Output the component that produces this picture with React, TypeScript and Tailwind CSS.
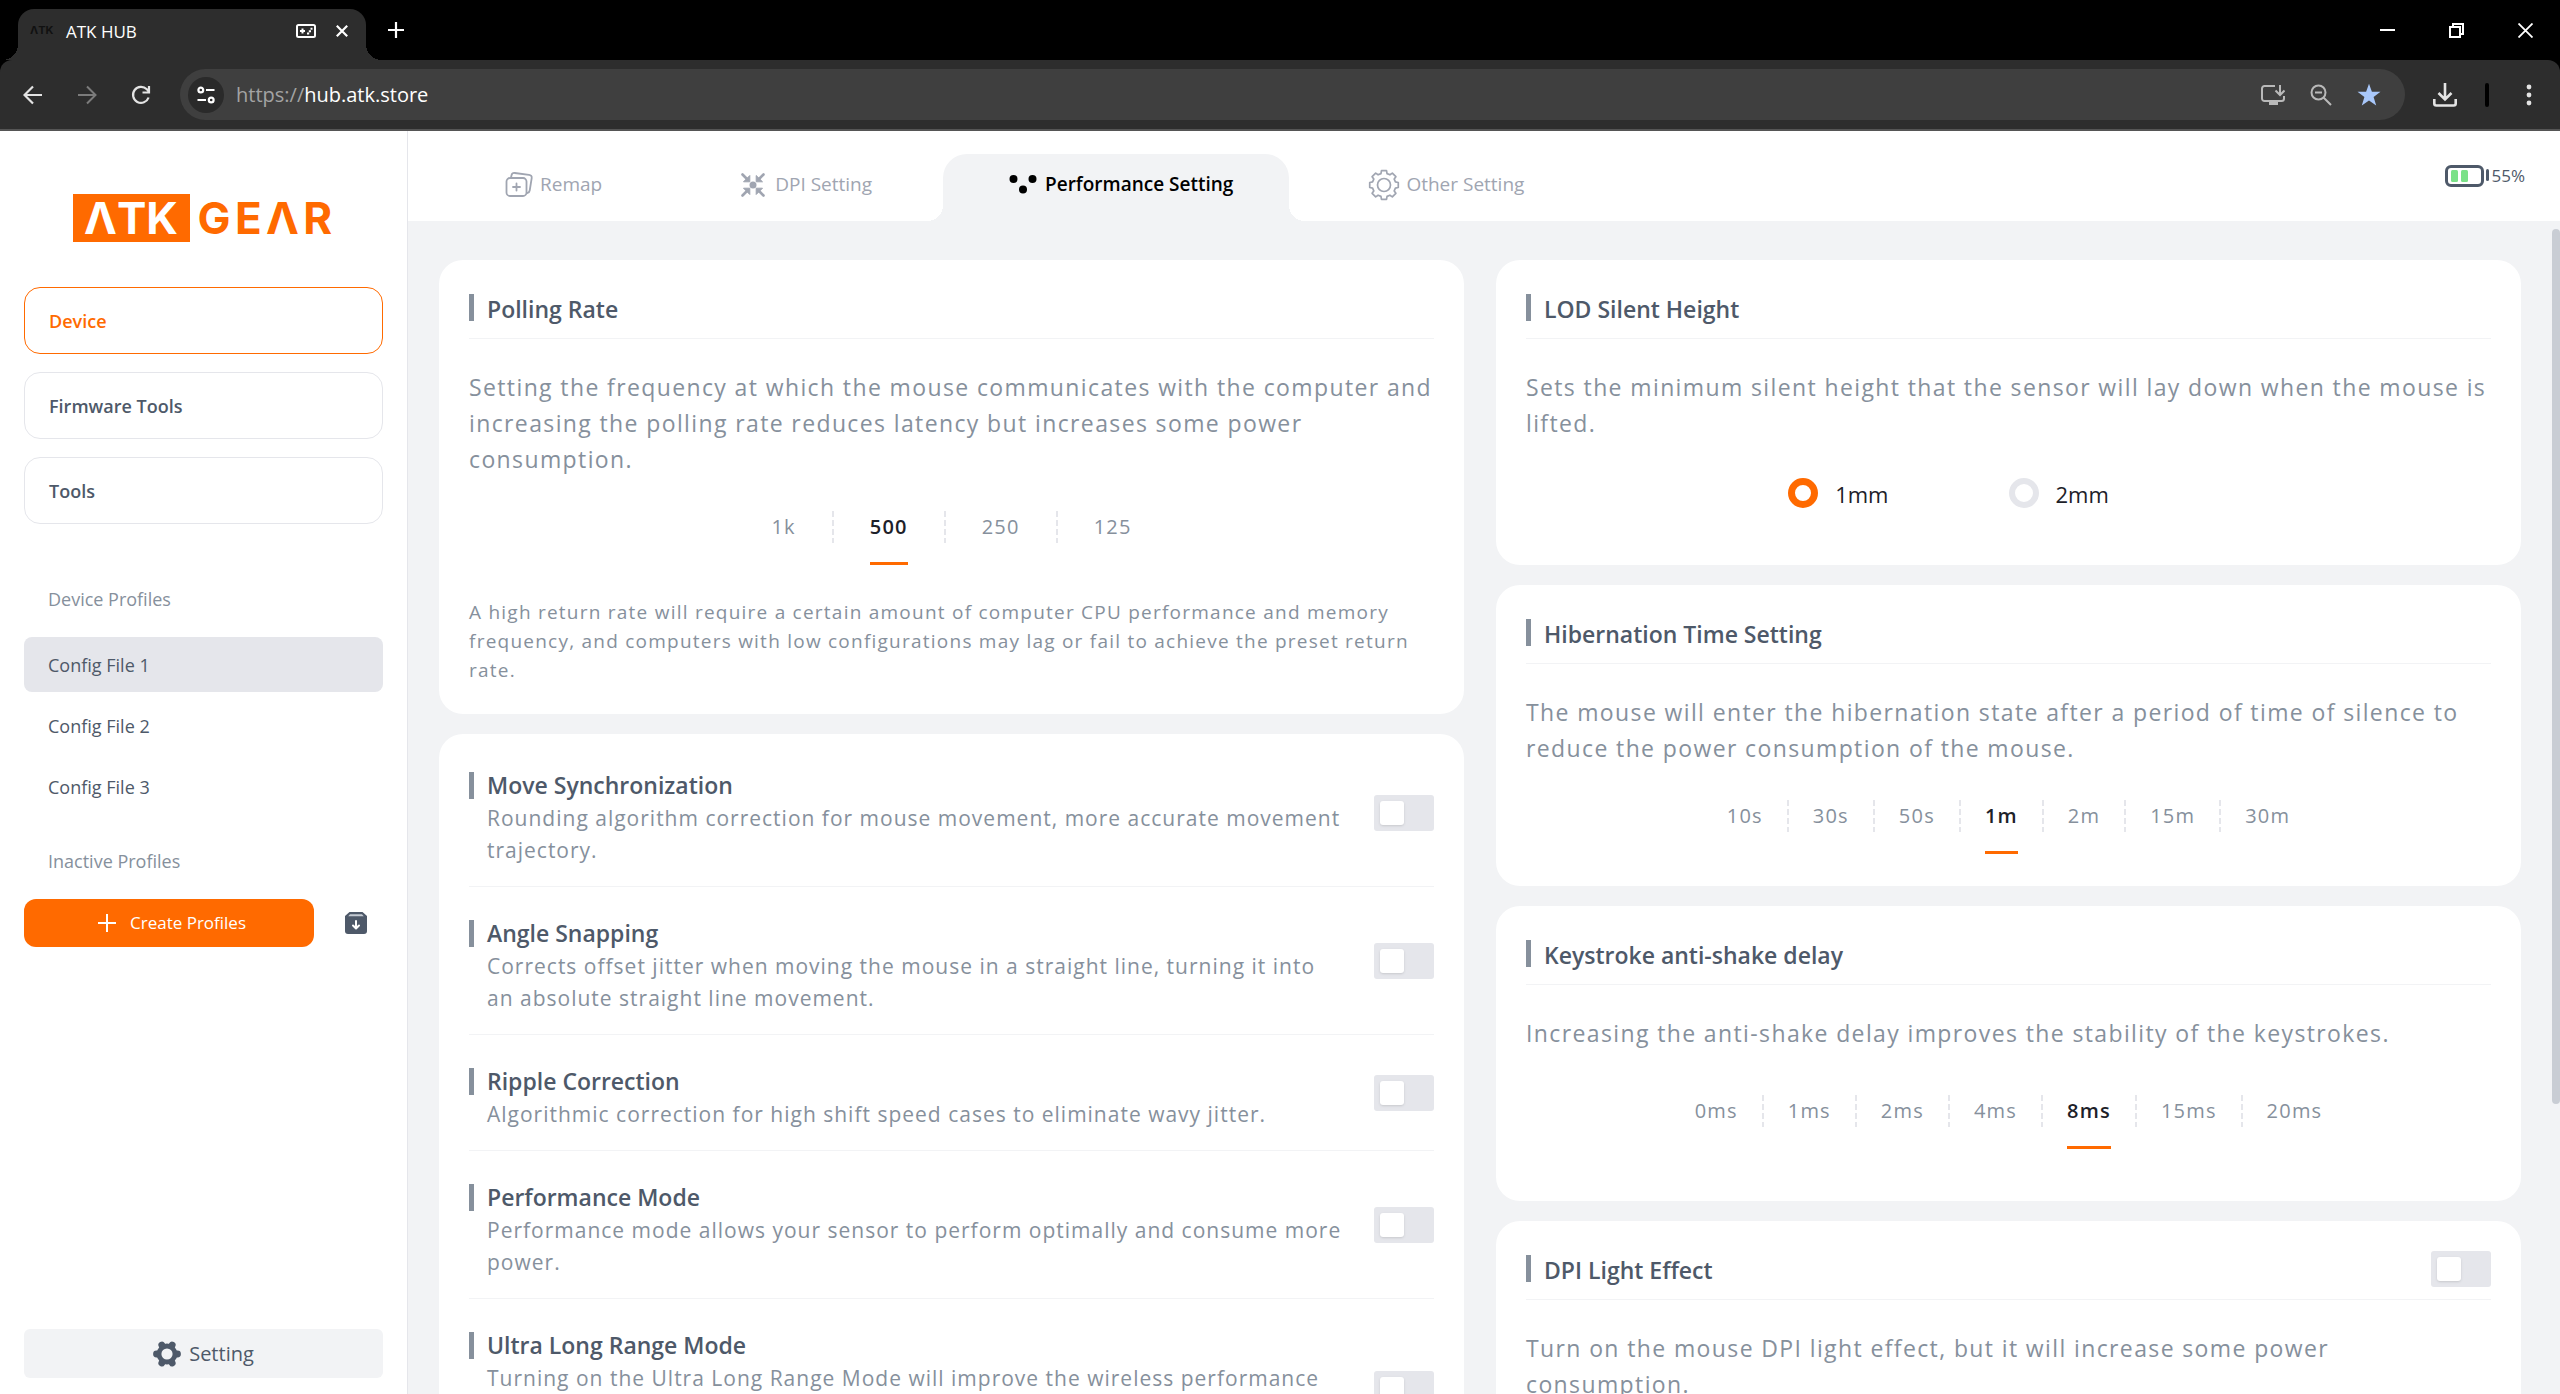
import { useState } from 'react';
import type { ReactNode } from 'react';
import clsx from 'clsx';

const TABS = [
  { label: 'Remap', icon: <RemapIcon /> },
  { label: 'DPI Setting', icon: <DpiIcon /> },
  { label: 'Performance Setting', icon: <PerformanceIcon /> },
  { label: 'Other Setting', icon: <GearOutlineIcon /> },
];

const SWITCHES = [
  {
    title: 'Move Synchronization',
    text: 'Rounding algorithm correction for mouse movement, more accurate movement trajectory.',
  },
  {
    title: 'Angle Snapping',
    text: 'Corrects offset jitter when moving the mouse in a straight line, turning it into an absolute straight line movement.',
  },
  {
    title: 'Ripple Correction',
    text: 'Algorithmic correction for high shift speed cases to eliminate wavy jitter.',
  },
  {
    title: 'Performance Mode',
    text: 'Performance mode allows your sensor to perform optimally and consume more power.',
  },
  {
    title: 'Ultra Long Range Mode',
    text: 'Turning on the Ultra Long Range Mode will improve the wireless performance',
    tall: true,
  },
];

/* Icons */

function RemapIcon() {
  return (
    <svg viewBox="0 0 32 32" className="size-8" fill="none" stroke="currentColor" strokeWidth="1.8" strokeLinecap="round" strokeLinejoin="round">
      <rect x="4.5" y="9" width="20" height="18" rx="3.5" />
      <path d="M9 8.5 9.6 6c.4-1.6 1.5-2.2 3.2-2L27 5.9c2 .3 3 1.3 2.7 3.2l-2 12.4c-.2 1.3-1 2.3-2.6 2.6" />
      <path d="M14.5 14.5v7M11 18h7" />
    </svg>
  );
}

function DpiIcon() {
  return (
    <svg viewBox="0 0 32 32" className="size-8" fill="currentColor" stroke="currentColor">
      <circle cx="16" cy="16" r="3.5" stroke="none" />
      <g strokeWidth="2.6" strokeLinecap="round">
        <path d="m5.5 5.5 4 4M26.5 5.5l-4 4M5.5 26.5l4-4M26.5 26.5l-4-4" />
      </g>
      <g strokeWidth="1" strokeLinejoin="round">
        <path d="M12.8 6.5v6.3H6.5zM19.2 6.5v6.3h6.3zM12.8 25.5v-6.3H6.5zM19.2 25.5v-6.3h6.3z" />
      </g>
    </svg>
  );
}

function PerformanceIcon() {
  return (
    <svg viewBox="0 0 32 32" className="size-8" fill="currentColor">
      <circle cx="6.5" cy="10" r="4" />
      <circle cx="25.5" cy="10" r="4" />
      <circle cx="16" cy="20.5" r="4" />
    </svg>
  );
}

function GearOutlineIcon() {
  const teeth = Array.from({ length: 8 }, (_, i) => {
    const at = (r: number, deg: number) => {
      const a = ((i * 45 + deg) * Math.PI) / 180;
      return `${(16 + r * Math.cos(a)).toFixed(2)} ${(16 + r * Math.sin(a)).toFixed(2)}`;
    };
    return [at(11.8, -15), at(14.5, -10), at(14.5, 10), at(11.8, 15)].join(' L');
  });
  return (
    <svg viewBox="0 0 32 32" className="size-8" fill="none" stroke="currentColor" strokeWidth="1.7" strokeLinejoin="round">
      <path d={`M${teeth.join(' L')}Z`} />
      <circle cx="16" cy="16" r="6.5" />
    </svg>
  );
}

function GearSolidIcon() {
  return (
    <svg viewBox="0 0 28 28" className="size-7" fill="none" stroke="currentColor">
      <g strokeWidth="6.8" strokeLinecap="round">
        <path d="M4.5 14H3.5M23.5 14h1M9.2 5.7 8.8 5M18.8 5.7l.4-.7M9.2 22.3l-.4.7M18.8 22.3l.4.7" />
      </g>
      <circle cx="14" cy="14" r="8" strokeWidth="4.8" />
    </svg>
  );
}

function ArchiveIcon() {
  return (
    <svg viewBox="0 0 22 22" className="size-[22px]">
      <path d="M4.5 0h13L22 4v15a3 3 0 0 1-3 3H3a3 3 0 0 1-3-3V4z" fill="#4e5969" />
      <path d="M5 2.2h12l1.8 2H3.2z" fill="#c5cbd3" />
      <path d="M11 9v7M8 13.5l3 3 3-3" fill="none" stroke="#fff" strokeWidth="2" strokeLinecap="round" strokeLinejoin="round" />
    </svg>
  );
}

function BatteryIcon() {
  return (
    <svg viewBox="0 0 44 22" className="w-11 h-[22px]">
      <rect x="1.5" y="1.5" width="36" height="19" rx="4.5" fill="#fff" stroke="#4e5969" strokeWidth="3" />
      <rect x="6" y="5" width="7" height="12" rx="1.5" fill="#7be188" />
      <rect x="16" y="5" width="7" height="12" rx="1.5" fill="#7be188" />
      <rect x="41" y="4" width="3" height="12" rx="1.5" fill="#4e5969" />
    </svg>
  );
}

/* Browser window */

function ChromeButton({ label, className, children }: { label: string; className: string; children: ReactNode }) {
  return (
    <button aria-label={label} className={clsx('flex items-center justify-center self-stretch shrink-0', className)}>
      {children}
    </button>
  );
}

function BrowserBar() {
  return (
    <div className="bg-black text-white shrink-0">
      <div className="flex h-[60px] pl-[18px]">
        <div className="relative mt-[9px] w-[348px] rounded-t-2xl bg-[#2d2d2d] flex items-center pl-3 pr-1.5 pb-2 before:absolute before:bottom-0 before:-left-4 before:size-4 before:bg-[radial-gradient(circle_at_0_0,transparent_16px,#2d2d2d_16px)] after:absolute after:bottom-0 after:-right-4 after:size-4 after:bg-[radial-gradient(circle_at_100%_0,transparent_16px,#2d2d2d_16px)]">
          <span className="w-9 font-['Inter'] text-[11px] font-bold text-[#111111]">ΛTK</span>
          <span className="flex-1 pt-0.5 text-[17px]">ATK HUB</span>
          <ChromeButton label="Game controller in use" className="w-9">
            <svg viewBox="0 0 20 14" className="w-5 h-3.5" fill="none" stroke="currentColor" strokeWidth="2">
              <rect x="1" y="1" width="18" height="12" rx="1.5" />
              <path d="M4 7h5M6.5 4.5v5M11 9.5h2.2M12.8 7.2H15M14.5 4.7h2" />
            </svg>
          </ChromeButton>
          <ChromeButton label="Close tab" className="w-9">
            <svg viewBox="0 0 12 12" className="size-3" stroke="currentColor" strokeWidth="2.2">
              <path d="m.8.8 10.4 10.4M11.2.8.8 11.2" />
            </svg>
          </ChromeButton>
        </div>
        <ChromeButton label="New tab" className="w-[60px]">
          <svg viewBox="0 0 16 16" className="size-4" stroke="currentColor" strokeWidth="2.2">
            <path d="M8 0v16M0 8h16" />
          </svg>
        </ChromeButton>
        <div className="ml-auto flex">
          <ChromeButton label="Minimize" className="w-[69px]">
            <svg viewBox="0 0 15 15" className="size-[15px]" stroke="currentColor" strokeWidth="2">
              <path d="M0 7h15" />
            </svg>
          </ChromeButton>
          <ChromeButton label="Restore" className="w-[69px]">
            <svg viewBox="0 0 15 15" className="size-[15px]" fill="none" stroke="currentColor" strokeWidth="2">
              <path d="M1 4h10v10H1zM4 4V1h10v10h-3" />
            </svg>
          </ChromeButton>
          <ChromeButton label="Close" className="w-[69px]">
            <svg viewBox="0 0 15 15" className="size-[15px]" stroke="currentColor" strokeWidth="1.8">
              <path d="m.5.5 14 14M14.5.5l-14 14" />
            </svg>
          </ChromeButton>
        </div>
      </div>

      <div className="flex items-center h-[71px] pl-1.5 rounded-t-xl bg-[#2d2d2d] border-b-2 border-[#555555] text-[#e3e3e3]">
        <ChromeButton label="Back" className="w-[54px]">
          <svg viewBox="0 0 20 20" className="size-5" fill="none" stroke="currentColor" strokeWidth="2.2">
            <path d="M19 10H2.5M10 1.5 1.5 10l8.5 8.5" />
          </svg>
        </ChromeButton>
        <ChromeButton label="Forward" className="w-[54px] text-[#7b7b7b]">
          <svg viewBox="0 0 20 20" className="size-5" fill="none" stroke="currentColor" strokeWidth="2">
            <path d="M1 10h16.5M10 1.5l8.5 8.5-8.5 8.5" />
          </svg>
        </ChromeButton>
        <ChromeButton label="Reload" className="w-[54px]">
          <svg viewBox="0 0 20 20" className="size-5" fill="none" stroke="currentColor" strokeWidth="2.2">
            <path d="M17.6 12.5a8 8 0 1 1-1.8-8.2L18 6.5M18 1v6.5h-6.5" />
          </svg>
        </ChromeButton>
        <div className="ml-3 flex-1 h-[51px] rounded-full bg-[#3f3f3f] flex items-center pl-2 pr-3">
          <button aria-label="View site information" className="size-9 rounded-full bg-[#2a2a2a] flex items-center justify-center text-white">
            <svg viewBox="0 0 18 18" className="size-[18px]" fill="none" stroke="currentColor" strokeWidth="2.2">
              <circle cx="3.8" cy="4" r="2.4" />
              <circle cx="14.2" cy="14" r="2.4" />
              <path d="M9 4h8.5M.5 14H9" />
            </svg>
          </button>
          <p className="ml-3 flex-1 text-[20px] text-white">
            <span className="text-[#a3a3a3]">https://</span>hub.atk.store
          </p>
          <ChromeButton label="Install app" className="w-12 text-[#b9b9b9]">
            <svg viewBox="0 0 24 22" className="w-6 h-[22px]" fill="none" stroke="currentColor" strokeWidth="2">
              <path d="M14 2H3.5A2.5 2.5 0 0 0 1 4.5v10A2.5 2.5 0 0 0 3.5 17h17a2.5 2.5 0 0 0 2.5-2.5V12M19 1v9.5M14.5 6.5 19 11l4.5-4.5" />
              <path d="M8 19.5h9" strokeWidth="3" />
            </svg>
          </ChromeButton>
          <ChromeButton label="Zoom" className="w-12 text-[#b9b9b9]">
            <svg viewBox="0 0 22 22" className="size-[22px]" fill="none" stroke="currentColor" strokeWidth="2">
              <circle cx="8.5" cy="8.5" r="7" />
              <path d="m13.5 13.5 7.5 7.5M5 8.5h7" />
            </svg>
          </ChromeButton>
          <ChromeButton label="Edit bookmark" className="w-12 text-[#a8c7fa]">
            <svg viewBox="0 0 24 24" className="size-6" fill="currentColor">
              <path d="m12 .8 2.9 8h8.6l-6.9 5.1 2.6 8.6L12 17.4l-7.2 5.1 2.6-8.6L.5 8.8h8.6z" />
            </svg>
          </ChromeButton>
        </div>
        <ChromeButton label="Downloads" className="w-20">
          <svg viewBox="0 0 24 24" className="size-6" fill="none" stroke="currentColor" strokeWidth="2.6">
            <path d="M12 0v16M5.5 10l6.5 6.5 6.5-6.5M1.3 16v4.5a2 2 0 0 0 2 2h17.4a2 2 0 0 0 2-2V16" />
          </svg>
        </ChromeButton>
        <span className="w-1 h-6 rounded-full bg-black" />
        <ChromeButton label="Menu" className="w-[71px] pl-2">
          <svg viewBox="0 0 6 22" className="w-1.5 h-[22px]" fill="currentColor">
            <circle cx="3" cy="3" r="2.4" />
            <circle cx="3" cy="11" r="2.4" />
            <circle cx="3" cy="19" r="2.4" />
          </svg>
        </ChromeButton>
      </div>
    </div>
  );
}

/* Sidebar */

function Sidebar() {
  const [profile, setProfile] = useState(1);

  return (
    <aside className="w-[408px] shrink-0 bg-white border-r border-[#e5e6eb] px-6 pt-[63px] pb-4 flex flex-col text-[#4e5969]">
      <div aria-label="ATK GEAR" className="flex justify-center items-center gap-2 h-12 font-['Inter'] text-[44px] leading-[48px] font-bold text-[#ff6a00]">
        <span className="h-12 w-[117px] text-center bg-[#ff6a00] text-white">ΛTK</span>
        <span className="w-[137px] tracking-widest">GEΛR</span>
      </div>

      <nav className="mt-[45px] flex flex-col gap-[18px] text-[18px] font-semibold">
        {['Device', 'Firmware Tools', 'Tools'].map((item, i) => (
          <button
            key={item}
            className={clsx(
              'h-[67px] rounded-2xl border px-6 pt-0.5 text-left',
              i === 0 ? 'border-[#ff6a00] text-[#ff6a00]' : 'border-[#e5e6eb]',
            )}
          >
            {item}
          </button>
        ))}
      </nav>

      <h2 className="mt-[61px] px-6 text-[18px] leading-7 text-[#86909c]">Device Profiles</h2>
      <div className="mt-6 flex flex-col gap-1.5 text-[18px]">
        {[1, 2, 3].map((n) => (
          <button
            key={n}
            onClick={() => setProfile(n)}
            className={clsx('h-[55px] rounded-lg px-6 pt-0.5 text-left', n === profile && 'bg-[#e5e6eb]')}
          >
            Config File {n}
          </button>
        ))}
      </div>

      <h2 className="mt-[33px] px-6 text-[18px] leading-7 text-[#86909c]">Inactive Profiles</h2>
      <div className="mt-6 flex items-center gap-[31px]">
        <button className="w-[290px] h-12 pl-1.5 rounded-xl bg-[#ff6a00] text-white text-[17px] flex items-center justify-center gap-3.5">
          <svg viewBox="0 0 18 18" className="size-[18px]" stroke="currentColor" strokeWidth="2">
            <path d="M9 0v18M0 9h18" />
          </svg>
          Create Profiles
        </button>
        <button aria-label="Import profile">
          <ArchiveIcon />
        </button>
      </div>

      <button className="mt-auto h-[49px] rounded-md bg-[#f2f3f5] flex items-center justify-center gap-2 text-[20px]">
        <GearSolidIcon />
        Setting
      </button>
    </aside>
  );
}

/* Settings */

function Switch({ label }: { label: string }) {
  return (
    <input
      type="checkbox"
      role="switch"
      aria-label={label}
      className="appearance-none shrink-0 w-[60px] h-9 p-1.5 rounded-[3px] bg-[#e5e6eb] checked:bg-[#ff6a00] before:block before:size-6 before:rounded-[3px] before:bg-white before:shadow checked:before:ml-6"
    />
  );
}

function Card({ title, action, className, children }: { title: string; action?: ReactNode; className?: string; children: ReactNode }) {
  return (
    <section className={clsx('rounded-3xl bg-white px-[30px]', className)}>
      <div className="h-[79px] pt-[17px] flex items-center border-b border-[#f2f3f5]">
        <span className="w-[5px] h-[27px] bg-[#86909c]" />
        <h2 className="ml-[13px] pt-1 flex-1 text-[23px] font-semibold text-[#4e5969]">{title}</h2>
        {action}
      </div>
      {children}
    </section>
  );
}

function Description({ className, children }: { className?: string; children: ReactNode }) {
  return (
    <p className={clsx('mt-[30px] text-[23px] leading-9 tracking-[0.06em] text-[#86909c]', className)}>{children}</p>
  );
}

function Options({ values, initial, compact }: { values: string[]; initial: string; compact?: boolean }) {
  const [value, setValue] = useState(initial);

  return (
    <div className="mt-[34px] flex justify-center items-start text-[20px] leading-8 tracking-[0.06em]">
      {values.map((v, i) => (
        <div key={v} className="flex items-start">
          {i > 0 && (
            <span className="w-0.5 h-8 bg-[repeating-linear-gradient(to_bottom,#e5e6eb_0_6px,transparent_6px_9px)]" />
          )}
          <button aria-pressed={v === value} onClick={() => setValue(v)} className={compact ? 'px-6' : 'px-9'}>
            <span
              className={clsx(
                'block pb-[19px] border-b-3',
                v === value ? 'border-[#ff6a00] font-semibold text-[#1d2129]' : 'border-transparent text-[#86909c]',
              )}
            >
              {v}
            </span>
          </button>
        </div>
      ))}
    </div>
  );
}

function Header() {
  return (
    <header className="h-[90px] shrink-0 bg-white flex items-end pl-[30px] pr-[35px]">
      <nav className="flex items-end gap-[15px]">
        {TABS.map(({ label, icon }) => {
          const active = label === 'Performance Setting';
          return (
            <button
              key={label}
              className={clsx(
                'relative h-[67px] pl-16 pr-14 pb-1.5 flex items-center gap-1.5 text-[19px]',
                active
                  ? "rounded-t-3xl bg-[#f2f3f5] font-semibold text-black before:absolute before:bottom-0 before:-left-4 before:size-4 before:bg-[radial-gradient(circle_at_0_0,transparent_16px,#f2f3f5_16px)] after:absolute after:bottom-0 after:-right-4 after:size-4 after:bg-[radial-gradient(circle_at_100%_0,transparent_16px,#f2f3f5_16px)]"
                  : 'text-[#a0a5b1]',
              )}
            >
              {icon}
              {label}
            </button>
          );
        })}
      </nav>
      <div className="ml-auto self-center flex items-center gap-[3px] text-[17px] text-[#4e5969]">
        <BatteryIcon />
        55%
      </div>
    </header>
  );
}

export default function App() {
  return (
    <div className="h-screen flex flex-col overflow-hidden font-['Open_Sans',sans-serif]">
      <BrowserBar />
      <div className="flex flex-1 min-h-0">
        <Sidebar />
        <div className="relative flex-1 min-w-0 flex flex-col bg-[#f2f3f5]">
          <Header />
          <main className="flex-1 min-h-0 overflow-hidden pt-[39px] pl-[31px] pr-[39px] grid grid-cols-2 gap-8 items-start">
            <div className="flex flex-col gap-5">
              <Card title="Polling Rate" className="pb-[29px]">
                <Description>
                  Setting the frequency at which the mouse communicates with the computer and increasing the polling
                  rate reduces latency but increases some power consumption.
                </Description>
                <Options values={['1k', '500', '250', '125']} initial="500" />
                <p className="mt-[33px] text-[19px] leading-[29px] tracking-[0.065em] text-[#86909c]">
                  A high return rate will require a certain amount of computer CPU performance and memory frequency,
                  and computers with low configurations may lag or fail to achieve the preset return rate.
                </p>
              </Card>

              <section className="rounded-3xl bg-white px-[30px] pt-[5px]">
                {SWITCHES.map(({ title, text, tall }) => (
                  <div key={title} className="flex items-center gap-[30px] pt-[30px] pb-5 border-b border-[#f2f3f5]">
                    <div className="flex-1">
                      <h2 className="flex items-center gap-[13px] text-[23px] leading-[33px] font-semibold text-[#4e5969]">
                        <span className="w-[5px] h-[27px] bg-[#86909c]" />
                        {title}
                      </h2>
                      <p
                        className={clsx(
                          'pl-[18px] text-[21px] leading-8 tracking-[1px] text-[#86909c]',
                          tall && 'min-h-24',
                        )}
                      >
                        {text}
                      </p>
                    </div>
                    <div className="pb-1">
                      <Switch label={title} />
                    </div>
                  </div>
                ))}
              </section>
            </div>

            <div className="flex flex-col gap-5">
              <Card title="LOD Silent Height" className="pb-[55px]">
                <Description>
                  Sets the minimum silent height that the sensor will lay down when the mouse is lifted.
                </Description>
                <div className="mt-[35px] flex justify-center text-[22px] leading-8 text-[#1d2129]">
                  {['1mm', '2mm'].map((h, i) => (
                    <label key={h} className="mr-[120px] flex items-center gap-[17px]">
                      <input
                        type="radio"
                        name="lod"
                        defaultChecked={i === 0}
                        className="appearance-none size-[30px] rounded-full bg-white border-6 border-[#e5e6eb] checked:border-7 checked:border-[#ff6a00]"
                      />
                      <span className="pt-0.5">{h}</span>
                    </label>
                  ))}
                </div>
              </Card>

              <Card title="Hibernation Time Setting" className="pb-8">
                <Description>
                  The mouse will enter the hibernation state after a period of time of silence to reduce the power
                  consumption of the mouse.
                </Description>
                <Options compact values={['10s', '30s', '50s', '1m', '2m', '15m', '30m']} initial="1m" />
              </Card>

              <Card title="Keystroke anti-shake delay" className="pb-[52px]">
                <Description className="min-h-[46px]">
                  Increasing the anti-shake delay improves the stability of the keystrokes.
                </Description>
                <Options compact values={['0ms', '1ms', '2ms', '4ms', '8ms', '15ms', '20ms']} initial="8ms" />
              </Card>

              <Card title="DPI Light Effect" action={<Switch label="DPI Light Effect" />} className="pb-14">
                <Description>
                  Turn on the mouse DPI light effect, but it will increase some power consumption.
                </Description>
              </Card>
            </div>
          </main>
          {/* Scroll thumb */}
          <div className="absolute right-0 top-[98px] h-[875px] w-2 rounded-full bg-[#c9cdd4]" />
        </div>
      </div>
    </div>
  );
}
